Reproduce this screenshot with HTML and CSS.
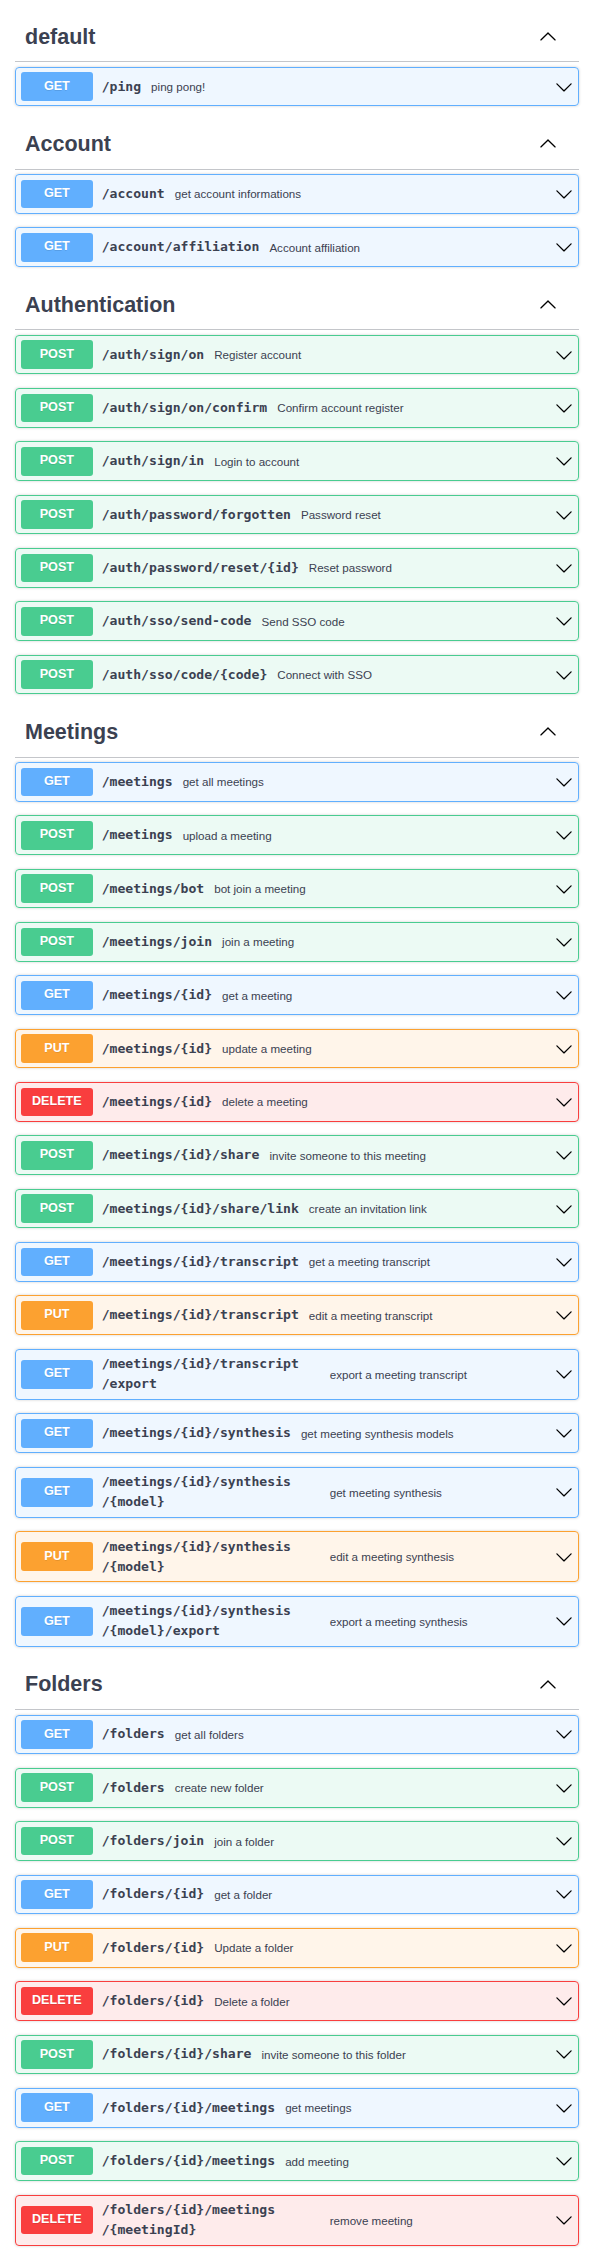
FILE: index.html
```html
<!DOCTYPE html>
<html lang="en">
<head>
<meta charset="utf-8">
<title>API docs</title>
<link rel="stylesheet" href="styles.css">
</head>
<body>
<svg class="defs" width="0" height="0" aria-hidden="true">
  <symbol id="arrow-down" viewBox="0 0 20 20"><path d="M17.418 6.109c.272-.268.709-.268.979 0s.271.701 0 .969l-7.908 7.83c-.27.268-.707.268-.979 0l-7.908-7.83c-.27-.268-.27-.701 0-.969.271-.268.709-.268.979 0L10 13.25l7.418-7.141z"/></symbol>
  <symbol id="arrow-up" viewBox="0 0 20 20"><path d="M17.418 14.908c.272.268.709.268.979 0s.271-.701 0-.969l-7.908-7.83c-.27-.268-.707-.268-.979 0l-7.908 7.83c-.27.268-.27.701 0 .969.271.268.709.268.979 0L10 7.767l7.418 7.141z"/></symbol>
</svg>
<div class="wrapper">

  <section class="tag-section">
    <h3 class="tag"><span class="tag-name">default</span><svg class="tag-arrow"><use href="#arrow-up"/></svg></h3>
    <div class="op get"><div class="summary"><span class="method">GET</span><span class="path">/ping</span><span class="desc">ping pong!</span><svg class="op-arrow"><use href="#arrow-down"/></svg></div></div>
  </section>

  <section class="tag-section">
    <h3 class="tag"><span class="tag-name">Account</span><svg class="tag-arrow"><use href="#arrow-up"/></svg></h3>
    <div class="op get"><div class="summary"><span class="method">GET</span><span class="path">/account</span><span class="desc">get account informations</span><svg class="op-arrow"><use href="#arrow-down"/></svg></div></div>
    <div class="op get"><div class="summary"><span class="method">GET</span><span class="path">/account<wbr>/affiliation</span><span class="desc">Account affiliation</span><svg class="op-arrow"><use href="#arrow-down"/></svg></div></div>
  </section>

  <section class="tag-section">
    <h3 class="tag"><span class="tag-name">Authentication</span><svg class="tag-arrow"><use href="#arrow-up"/></svg></h3>
    <div class="op post"><div class="summary"><span class="method">POST</span><span class="path">/auth<wbr>/sign<wbr>/on</span><span class="desc">Register account</span><svg class="op-arrow"><use href="#arrow-down"/></svg></div></div>
    <div class="op post"><div class="summary"><span class="method">POST</span><span class="path">/auth<wbr>/sign<wbr>/on<wbr>/confirm</span><span class="desc">Confirm account register</span><svg class="op-arrow"><use href="#arrow-down"/></svg></div></div>
    <div class="op post"><div class="summary"><span class="method">POST</span><span class="path">/auth<wbr>/sign<wbr>/in</span><span class="desc">Login to account</span><svg class="op-arrow"><use href="#arrow-down"/></svg></div></div>
    <div class="op post"><div class="summary"><span class="method">POST</span><span class="path">/auth<wbr>/password<wbr>/forgotten</span><span class="desc">Password reset</span><svg class="op-arrow"><use href="#arrow-down"/></svg></div></div>
    <div class="op post"><div class="summary"><span class="method">POST</span><span class="path">/auth<wbr>/password<wbr>/reset<wbr>/{id}</span><span class="desc">Reset password</span><svg class="op-arrow"><use href="#arrow-down"/></svg></div></div>
    <div class="op post"><div class="summary"><span class="method">POST</span><span class="path">/auth<wbr>/sso<wbr>/send-code</span><span class="desc">Send SSO code</span><svg class="op-arrow"><use href="#arrow-down"/></svg></div></div>
    <div class="op post"><div class="summary"><span class="method">POST</span><span class="path">/auth<wbr>/sso<wbr>/code<wbr>/{code}</span><span class="desc">Connect with SSO</span><svg class="op-arrow"><use href="#arrow-down"/></svg></div></div>
  </section>

  <section class="tag-section">
    <h3 class="tag"><span class="tag-name">Meetings</span><svg class="tag-arrow"><use href="#arrow-up"/></svg></h3>
    <div class="op get"><div class="summary"><span class="method">GET</span><span class="path">/meetings</span><span class="desc">get all meetings</span><svg class="op-arrow"><use href="#arrow-down"/></svg></div></div>
    <div class="op post"><div class="summary"><span class="method">POST</span><span class="path">/meetings</span><span class="desc">upload a meeting</span><svg class="op-arrow"><use href="#arrow-down"/></svg></div></div>
    <div class="op post"><div class="summary"><span class="method">POST</span><span class="path">/meetings<wbr>/bot</span><span class="desc">bot join a meeting</span><svg class="op-arrow"><use href="#arrow-down"/></svg></div></div>
    <div class="op post"><div class="summary"><span class="method">POST</span><span class="path">/meetings<wbr>/join</span><span class="desc">join a meeting</span><svg class="op-arrow"><use href="#arrow-down"/></svg></div></div>
    <div class="op get"><div class="summary"><span class="method">GET</span><span class="path">/meetings<wbr>/{id}</span><span class="desc">get a meeting</span><svg class="op-arrow"><use href="#arrow-down"/></svg></div></div>
    <div class="op put"><div class="summary"><span class="method">PUT</span><span class="path">/meetings<wbr>/{id}</span><span class="desc">update a meeting</span><svg class="op-arrow"><use href="#arrow-down"/></svg></div></div>
    <div class="op delete"><div class="summary"><span class="method">DELETE</span><span class="path">/meetings<wbr>/{id}</span><span class="desc">delete a meeting</span><svg class="op-arrow"><use href="#arrow-down"/></svg></div></div>
    <div class="op post"><div class="summary"><span class="method">POST</span><span class="path">/meetings<wbr>/{id}<wbr>/share</span><span class="desc">invite someone to this meeting</span><svg class="op-arrow"><use href="#arrow-down"/></svg></div></div>
    <div class="op post"><div class="summary"><span class="method">POST</span><span class="path">/meetings<wbr>/{id}<wbr>/share<wbr>/link</span><span class="desc">create an invitation link</span><svg class="op-arrow"><use href="#arrow-down"/></svg></div></div>
    <div class="op get"><div class="summary"><span class="method">GET</span><span class="path">/meetings<wbr>/{id}<wbr>/transcript</span><span class="desc">get a meeting transcript</span><svg class="op-arrow"><use href="#arrow-down"/></svg></div></div>
    <div class="op put"><div class="summary"><span class="method">PUT</span><span class="path">/meetings<wbr>/{id}<wbr>/transcript</span><span class="desc">edit a meeting transcript</span><svg class="op-arrow"><use href="#arrow-down"/></svg></div></div>
    <div class="op get"><div class="summary"><span class="method">GET</span><span class="path">/meetings<wbr>/{id}<wbr>/transcript<wbr>/export</span><span class="desc">export a meeting transcript</span><svg class="op-arrow"><use href="#arrow-down"/></svg></div></div>
    <div class="op get"><div class="summary"><span class="method">GET</span><span class="path">/meetings<wbr>/{id}<wbr>/synthesis</span><span class="desc">get meeting synthesis models</span><svg class="op-arrow"><use href="#arrow-down"/></svg></div></div>
    <div class="op get"><div class="summary"><span class="method">GET</span><span class="path">/meetings<wbr>/{id}<wbr>/synthesis<wbr>/{model}</span><span class="desc">get meeting synthesis</span><svg class="op-arrow"><use href="#arrow-down"/></svg></div></div>
    <div class="op put"><div class="summary"><span class="method">PUT</span><span class="path">/meetings<wbr>/{id}<wbr>/synthesis<wbr>/{model}</span><span class="desc">edit a meeting synthesis</span><svg class="op-arrow"><use href="#arrow-down"/></svg></div></div>
    <div class="op get"><div class="summary"><span class="method">GET</span><span class="path">/meetings<wbr>/{id}<wbr>/synthesis<wbr>/{model}<wbr>/export</span><span class="desc">export a meeting synthesis</span><svg class="op-arrow"><use href="#arrow-down"/></svg></div></div>
  </section>

  <section class="tag-section">
    <h3 class="tag"><span class="tag-name">Folders</span><svg class="tag-arrow"><use href="#arrow-up"/></svg></h3>
    <div class="op get"><div class="summary"><span class="method">GET</span><span class="path">/folders</span><span class="desc">get all folders</span><svg class="op-arrow"><use href="#arrow-down"/></svg></div></div>
    <div class="op post"><div class="summary"><span class="method">POST</span><span class="path">/folders</span><span class="desc">create new folder</span><svg class="op-arrow"><use href="#arrow-down"/></svg></div></div>
    <div class="op post"><div class="summary"><span class="method">POST</span><span class="path">/folders<wbr>/join</span><span class="desc">join a folder</span><svg class="op-arrow"><use href="#arrow-down"/></svg></div></div>
    <div class="op get"><div class="summary"><span class="method">GET</span><span class="path">/folders<wbr>/{id}</span><span class="desc">get a folder</span><svg class="op-arrow"><use href="#arrow-down"/></svg></div></div>
    <div class="op put"><div class="summary"><span class="method">PUT</span><span class="path">/folders<wbr>/{id}</span><span class="desc">Update a folder</span><svg class="op-arrow"><use href="#arrow-down"/></svg></div></div>
    <div class="op delete"><div class="summary"><span class="method">DELETE</span><span class="path">/folders<wbr>/{id}</span><span class="desc">Delete a folder</span><svg class="op-arrow"><use href="#arrow-down"/></svg></div></div>
    <div class="op post"><div class="summary"><span class="method">POST</span><span class="path">/folders<wbr>/{id}<wbr>/share</span><span class="desc">invite someone to this folder</span><svg class="op-arrow"><use href="#arrow-down"/></svg></div></div>
    <div class="op get"><div class="summary"><span class="method">GET</span><span class="path">/folders<wbr>/{id}<wbr>/meetings</span><span class="desc">get meetings</span><svg class="op-arrow"><use href="#arrow-down"/></svg></div></div>
    <div class="op post"><div class="summary"><span class="method">POST</span><span class="path">/folders<wbr>/{id}<wbr>/meetings</span><span class="desc">add meeting</span><svg class="op-arrow"><use href="#arrow-down"/></svg></div></div>
    <div class="op delete"><div class="summary"><span class="method">DELETE</span><span class="path">/folders<wbr>/{id}<wbr>/meetings<wbr>/{meetingId}</span><span class="desc">remove meeting</span><svg class="op-arrow"><use href="#arrow-down"/></svg></div></div>
  </section>

</div>
</body>
</html>
```
FILE: styles.css
```css
html, body {
  margin: 0;
  padding: 0;
  background: #fff;
}
body {
  font-family: "Liberation Sans", Arial, sans-serif;
  color: #3b4151;
}
.defs {
  position: absolute;
  width: 0;
  height: 0;
  overflow: hidden;
}
.wrapper {
  padding: 12.8px 14px 20px 15px;
}
.tag-section {
  display: flex;
  flex-direction: column;
}
.tag {
  box-sizing: border-box;
  display: flex;
  align-items: center;
  height: 49.5px;
  margin: 0 0 4.5px;
  padding: 0 22px 0 10px;
  border-bottom: 1px solid rgba(59, 65, 81, 0.3);
  font-family: "Liberation Sans", Arial, sans-serif;
  font-size: 21.5px;
  font-weight: 700;
  color: #3b4151;
}
.tag-name {
  flex: 1 1 auto;
  line-height: normal;
}
.tag-arrow {
  width: 18px;
  height: 18px;
  flex: 0 0 auto;
  fill: #000;
  margin-bottom: 2px;
}
.op {
  margin: 0 0 13.65px;
  border: 1px solid #000;
  border-radius: 4px;
  box-shadow: 0 0 3px rgba(0, 0, 0, 0.19);
}
.summary {
  display: flex;
  align-items: center;
  padding: 4.5px 5px 4.5px 5px;
}
.method {
  box-sizing: border-box;
  flex: 0 0 auto;
  width: 71.7px;
  height: 28.7px;
  padding-top: 5.5px;
  border-radius: 3px;
  font-family: "Liberation Sans", Arial, sans-serif;
  font-size: 12.6px;
  line-height: 16px;
  font-weight: 700;
  text-align: center;
  color: #fff;
  text-shadow: 0 1px 0 rgba(0, 0, 0, 0.1);
}
.path {
  box-sizing: border-box;
  flex: 0 0 auto;
  max-width: 237px;
  padding: 0 10px 0 9px;
  font-family: "DejaVu Sans Mono", monospace;
  font-size: 13.1px;
  font-weight: 700;
  line-height: 20px;
  color: #3b4151;
}
.desc {
  flex: 1 1 auto;
  font-family: "Liberation Sans", Arial, sans-serif;
  font-size: 11.6px;
  color: #3b4151;
}
.op-arrow {
  width: 18px;
  height: 18px;
  flex: 0 0 auto;
  fill: #000;
}

.get { background: rgba(97, 175, 254, 0.1); border-color: #61affe; }
.get .method { background: #61affe; }
.post { background: rgba(73, 204, 144, 0.1); border-color: #49cc90; }
.post .method { background: #49cc90; }
.put { background: rgba(252, 161, 48, 0.1); border-color: #fca130; }
.put .method { background: #fca130; }
.delete { background: rgba(249, 62, 62, 0.1); border-color: #f93e3e; }
.delete .method { background: #f93e3e; }
```
